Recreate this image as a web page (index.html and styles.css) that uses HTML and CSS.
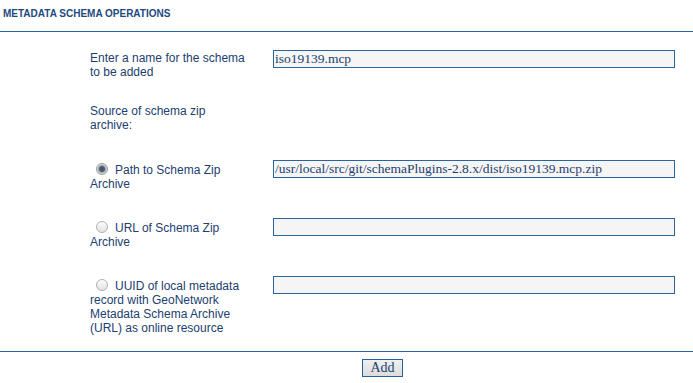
FILE: index.html
```html
<!DOCTYPE html>
<html lang="en">
<head>
    <meta charset="UTF-8">
    <title>Metadata schema operations</title>
    <link rel="stylesheet" href="styles.css">
</head>
<body>
<div class="panel">
    <h1 class="panel_title">METADATA SCHEMA OPERATIONS</h1>
    <div class="form">
        <div class="row">
            <div class="label">Enter a name for the schema to be added</div>
            <div class="field"><input class="text" type="text" value="iso19139.mcp"></div>
        </div>
        <div class="row row_source">
            <div class="label">Source of schema zip archive:</div>
            <div class="field"></div>
        </div>
        <div class="row row_radio">
            <div class="label"><span class="radio checked"></span>Path to Schema Zip Archive</div>
            <div class="field"><input class="text" type="text" value="/usr/local/src/git/schemaPlugins-2.8.x/dist/iso19139.mcp.zip"></div>
        </div>
        <div class="row row_radio">
            <div class="label"><span class="radio"></span>URL of Schema Zip Archive</div>
            <div class="field"><input class="text" type="text" value=""></div>
        </div>
        <div class="row row_radio">
            <div class="label"><span class="radio"></span>UUID of local metadata record with GeoNetwork Metadata Schema Archive (URL) as online resource</div>
            <div class="field"><input class="text" type="text" value=""></div>
        </div>
    </div>
    <div class="buttons">
        <button class="btn" type="button">Add</button>
    </div>
</div>
</body>
</html>
```

FILE: styles.css
```css
* {
    margin: 0;
    padding: 0;
    box-sizing: border-box;
}

body {
    background: #fff;
    font-family: "Liberation Sans", Arial, sans-serif;
    color: #1d406f;
}

.panel_title {
    font-size: 10px;
    font-weight: bold;
    color: #1d4a7e;
    padding: 8px 3px 0;
    height: 32px;
    border-bottom: 1px solid #2a64a0;
}

.form {
    display: flex;
    flex-direction: column;
    padding: 18px 0 16px 90px;
    border-bottom: 1px solid #2a64a0;
}

.row {
    display: grid;
    grid-template-columns: 160px 402px;
    column-gap: 23px;
    align-items: start;
    margin-bottom: 24px;
}

.row_source {
    margin-bottom: 28px;
}

.row_radio {
    margin-bottom: 27px;
}

.row:last-child {
    margin-bottom: 0;
}

.label {
    font-size: 12px;
    line-height: 14px;
    padding-top: 1px;
}

.row_radio .label {
    padding-top: 3px;
}

.radio {
    display: inline-block;
    width: 12px;
    height: 12px;
    margin: 0 7px 0 6px;
    vertical-align: -1px;
    border-radius: 50%;
    border: 1px solid #b0b0b0;
    background: linear-gradient(#fdfdfd, #e2e2e2);
}

.radio.checked {
    border-color: #9a9a9a;
    background: radial-gradient(circle, #3f5164 0, #4d5f72 2.5px, #9aa6b2 3.5px, #d4d4d4 4.5px, #ececec 6px);
}

.text {
    display: block;
    width: 402px;
    height: 18px;
    border: 1px solid #2a64a0;
    background: #f5f5f5;
    font-family: "Liberation Serif", "Times New Roman", serif;
    font-size: 13.5px;
    color: #1d406f;
    padding: 0 1px;
    outline: none;
}

.buttons {
    width: 675px;
    padding-left: 90px;
    padding-top: 6px;
    text-align: center;
}

.btn {
    width: 41px;
    height: 18px;
    border: 1px solid #2a5f95;
    background: linear-gradient(#f0f0f0, #dcdcdc);
    font-family: "Liberation Serif", "Times New Roman", serif;
    font-size: 14px;
    color: #1d406f;
}
```
